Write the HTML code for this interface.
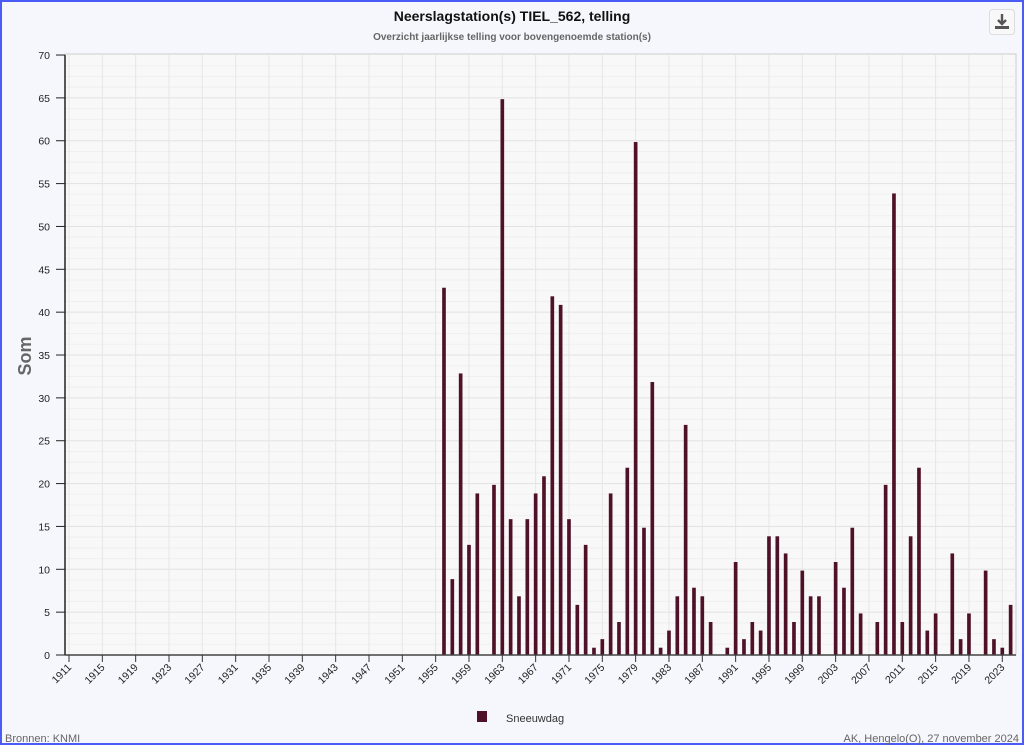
<!DOCTYPE html>
<html><head><meta charset="utf-8"><style>
html,body{margin:0;padding:0;width:1024px;height:745px;overflow:hidden;background:#f6f7fd;}
svg{display:block;font-family:"Liberation Sans",sans-serif;}
</style></head><body>
<svg id="c" width="1024" height="745" xmlns="http://www.w3.org/2000/svg">
<rect x="1" y="1" width="1022" height="743" fill="#f6f7fd" stroke="#4a5cf5" stroke-width="2"/>
<text x="512" y="21" text-anchor="middle" font-size="14" font-weight="bold" fill="#111">Neerslagstation(s) TIEL_562, telling</text>
<text x="512" y="40" text-anchor="middle" font-size="10" font-weight="bold" fill="#666">Overzicht jaarlijkse telling voor bovengenoemde station(s)</text>
<rect x="989.5" y="9.5" width="25" height="25" rx="3" fill="#f8f8f8" stroke="#ddd"/>
<path d="M1002 14v10M998 20l4 4 4-4" stroke="#555" stroke-width="2.4" fill="none"/>
<rect x="995" y="26" width="14" height="3" fill="#555"/>
<rect x="65" y="54" width="951" height="601" fill="#f8f8f8" stroke="#ccc"/>
<g id="grid"></g>
<g transform="translate(69,655) scale(8.333,-8.571)" fill="#4f1128">
<rect x="44.78" y="0" width="0.44" height="42.85"/>
<rect x="45.78" y="0" width="0.44" height="8.85"/>
<rect x="46.78" y="0" width="0.44" height="32.85"/>
<rect x="47.78" y="0" width="0.44" height="12.85"/>
<rect x="48.78" y="0" width="0.44" height="18.85"/>
<rect x="50.78" y="0" width="0.44" height="19.85"/>
<rect x="51.78" y="0" width="0.44" height="64.85"/>
<rect x="52.78" y="0" width="0.44" height="15.85"/>
<rect x="53.78" y="0" width="0.44" height="6.85"/>
<rect x="54.78" y="0" width="0.44" height="15.85"/>
<rect x="55.78" y="0" width="0.44" height="18.85"/>
<rect x="56.78" y="0" width="0.44" height="20.85"/>
<rect x="57.78" y="0" width="0.44" height="41.85"/>
<rect x="58.78" y="0" width="0.44" height="40.85"/>
<rect x="59.78" y="0" width="0.44" height="15.85"/>
<rect x="60.78" y="0" width="0.44" height="5.85"/>
<rect x="61.78" y="0" width="0.44" height="12.85"/>
<rect x="62.78" y="0" width="0.44" height="0.85"/>
<rect x="63.78" y="0" width="0.44" height="1.85"/>
<rect x="64.78" y="0" width="0.44" height="18.85"/>
<rect x="65.78" y="0" width="0.44" height="3.85"/>
<rect x="66.78" y="0" width="0.44" height="21.85"/>
<rect x="67.78" y="0" width="0.44" height="59.85"/>
<rect x="68.78" y="0" width="0.44" height="14.85"/>
<rect x="69.78" y="0" width="0.44" height="31.85"/>
<rect x="70.78" y="0" width="0.44" height="0.85"/>
<rect x="71.78" y="0" width="0.44" height="2.85"/>
<rect x="72.78" y="0" width="0.44" height="6.85"/>
<rect x="73.78" y="0" width="0.44" height="26.85"/>
<rect x="74.78" y="0" width="0.44" height="7.85"/>
<rect x="75.78" y="0" width="0.44" height="6.85"/>
<rect x="76.78" y="0" width="0.44" height="3.85"/>
<rect x="78.78" y="0" width="0.44" height="0.85"/>
<rect x="79.78" y="0" width="0.44" height="10.85"/>
<rect x="80.78" y="0" width="0.44" height="1.85"/>
<rect x="81.78" y="0" width="0.44" height="3.85"/>
<rect x="82.78" y="0" width="0.44" height="2.85"/>
<rect x="83.78" y="0" width="0.44" height="13.85"/>
<rect x="84.78" y="0" width="0.44" height="13.85"/>
<rect x="85.78" y="0" width="0.44" height="11.85"/>
<rect x="86.78" y="0" width="0.44" height="3.85"/>
<rect x="87.78" y="0" width="0.44" height="9.85"/>
<rect x="88.78" y="0" width="0.44" height="6.85"/>
<rect x="89.78" y="0" width="0.44" height="6.85"/>
<rect x="91.78" y="0" width="0.44" height="10.85"/>
<rect x="92.78" y="0" width="0.44" height="7.85"/>
<rect x="93.78" y="0" width="0.44" height="14.85"/>
<rect x="94.78" y="0" width="0.44" height="4.85"/>
<rect x="96.78" y="0" width="0.44" height="3.85"/>
<rect x="97.78" y="0" width="0.44" height="19.85"/>
<rect x="98.78" y="0" width="0.44" height="53.85"/>
<rect x="99.78" y="0" width="0.44" height="3.85"/>
<rect x="100.78" y="0" width="0.44" height="13.85"/>
<rect x="101.78" y="0" width="0.44" height="21.85"/>
<rect x="102.78" y="0" width="0.44" height="2.85"/>
<rect x="103.78" y="0" width="0.44" height="4.85"/>
<rect x="105.78" y="0" width="0.44" height="11.85"/>
<rect x="106.78" y="0" width="0.44" height="1.85"/>
<rect x="107.78" y="0" width="0.44" height="4.85"/>
<rect x="109.78" y="0" width="0.44" height="9.85"/>
<rect x="110.78" y="0" width="0.44" height="1.85"/>
<rect x="111.78" y="0" width="0.44" height="0.85"/>
<rect x="112.78" y="0" width="0.44" height="5.85"/>
</g>
<line x1="65" y1="55" x2="65" y2="655" stroke="#222" stroke-width="1.5"/>
<line x1="65" y1="655" x2="1016" y2="655" stroke="#444" stroke-width="1.5"/>
<g id="ax" font-size="10.5" fill="#222"></g>
<text transform="translate(31,356) rotate(-90)" text-anchor="middle" font-size="18" font-weight="bold" fill="#666">Som</text>
<rect x="477" y="711" width="10" height="11" fill="#4f1128"/>
<text x="506" y="722" font-size="11" fill="#333">Sneeuwdag</text>
<text x="5" y="742" font-size="11" fill="#666">Bronnen: KNMI</text>
<text x="1019" y="742" text-anchor="end" font-size="11" fill="#666">AK, Hengelo(O), 27 november 2024</text>
</svg>
<script>
var ns="http://www.w3.org/2000/svg";
function el(p,t,a,txt){var e=document.createElementNS(ns,t);for(var k in a)e.setAttribute(k,a[k]);if(txt!=null)e.textContent=txt;document.getElementById(p).appendChild(e);}
var X=function(y){return 69+(y-1911)*8.333;};
var Y=function(v){return 655-v*8.571;};
for(var v=0;v<70;v+=1.25){var y=Y(v);el("grid","line",{x1:65,x2:1016,y1:y,y2:y,stroke:(v%5==0)?"#e2e2e2":"#efefef","stroke-width":1});}
for(var yr=1911;yr<=2023;yr+=4){var x=X(yr);el("grid","line",{x1:x,x2:x,y1:55,y2:655,stroke:"#e6e6e6","stroke-width":1});
el("ax","line",{x1:x,x2:x,y1:655,y2:662,stroke:"#333","stroke-width":1});
el("ax","text",{transform:"translate("+(x+3)+",668) rotate(-45)","text-anchor":"end"},yr);}
for(var v=0;v<=70;v+=5){var y=Y(v);el("ax","line",{x1:56,x2:65,y1:y,y2:y,stroke:"#222","stroke-width":1});
el("ax","text",{x:50,y:y+4,"text-anchor":"end"},v);}
</script>
</body></html>
